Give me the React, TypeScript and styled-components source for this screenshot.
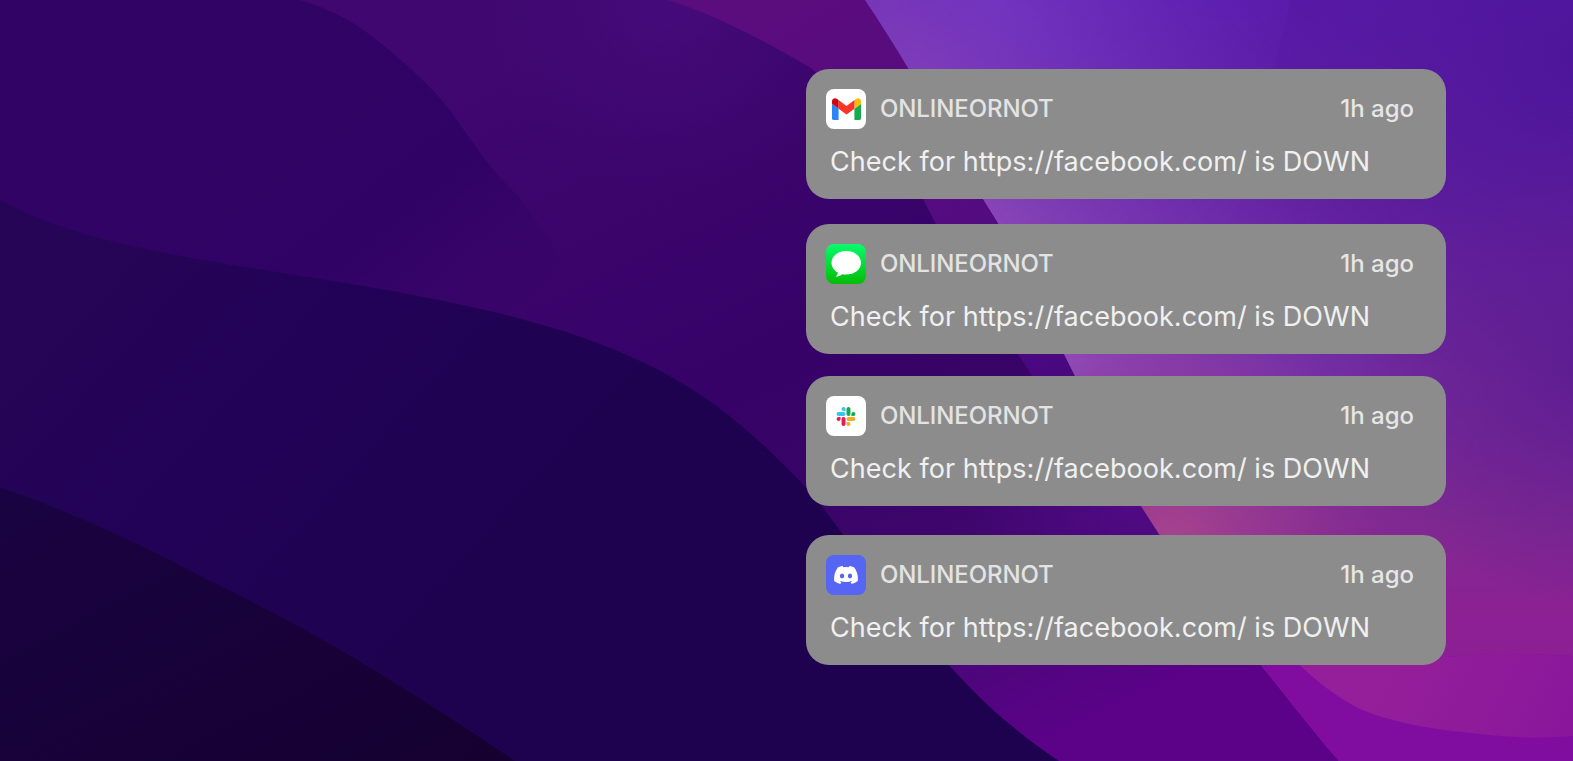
import type { ReactNode } from "react"
import { createGlobalStyle, styled } from "styled-components"
import { FaDiscord } from "react-icons/fa"

const App = () => {
  return (
    <>
      <GlobalStyle />
      <Screen>
        <Wallpaper />
        <NotificationList>
          <Notification icon={<GmailIcon />} iconColor="#fff" />
          <Notification icon={<MessagesIcon />} iconColor="linear-gradient(#07fb6c, #04bd06)" gap={25} />
          <Notification icon={<SlackIcon />} iconColor="#fff" gap={22} />
          <Notification icon={<FaDiscord size={26} />} iconColor="#5765f5" gap={29} />
        </NotificationList>
      </Screen>
    </>
  )
}

export default App

type NotificationProps = {
  icon: ReactNode
  iconColor: string
  gap?: number
}

const Notification = ({ icon, iconColor, gap = 0 }: NotificationProps) => {
  return (
    <Card $gap={gap}>
      <CardHeader>
        <AppIcon $color={iconColor}>{icon}</AppIcon>
        <AppName>ONLINEORNOT</AppName>
        <Time>1h ago</Time>
      </CardHeader>
      <Message>Check for https://facebook.com/ is DOWN</Message>
    </Card>
  )
}

const GmailIcon = () => (
  <svg width="29" height="22" viewBox="52 42 88 66">
    <path fill="#2a85f5" d="M58 108h14V74L52 59v43c0 3.3 0 6 6 6" />
    <path fill="#16ac4c" d="M120 108h14c6 0 6-2.7 6-6V59l-20 15" />
    <path fill="#fbbc04" d="M120 48v26l20-15v-8c0-7.4-8.5-11.6-14.4-7.2" />
    <path fill="#fa3426" d="M72 74V48l24 18 24-18v26L96 92" />
    <path fill="#c90a12" d="M52 51v8l20 15V48l-5.6-4.2c-6-4.4-14.4-.2-14.4 7.2" />
  </svg>
)

const MessagesIcon = () => (
  <svg width="40" height="40" viewBox="0 0 40 40">
    <path
      fill="#fff"
      d="M20.3 7C12 7 5.5 12.1 5.5 18.8c0 4.2 2.5 7.6 6.3 9.8-.1 1.6-.9 2.9-2.2 4 2.6-.1 4.9-1 6.7-2.4 1.300.3 2.600.4 4 .4 8.200 0 14.700-5.100 14.700-11.800S28.500 7 20.300 7z"
    />
  </svg>
)

const SlackIcon = () => (
  <svg width="20" height="19" viewBox="0 0 127 127">
    <path
      fill="#e01e5a"
      d="M27.2 80c0 7.3-5.9 13.2-13.2 13.2S.8 87.300.8 80s5.900-13.200 13.200-13.200h13.200V80zm6.600 0c0-7.300 5.900-13.200 13.200-13.200s13.200 5.900 13.200 13.200v33c0 7.300-5.900 13.200-13.200 13.200s-13.200-5.900-13.200-13.200V80z"
    />
    <path
      fill="#36c5f0"
      d="M47 27c-7.300 0-13.200-5.900-13.200-13.200S39.700.6 47 .6s13.200 5.900 13.200 13.200V27H47zm0 6.700c7.300 0 13.200 5.900 13.200 13.200S54.300 60.100 47 60.100H13.900C6.600 60.100.7 54.200.7 46.900s5.900-13.200 13.200-13.200H47z"
    />
    <path
      fill="#10ad50"
      d="M99.900 46.900c0-7.300 5.900-13.200 13.200-13.200s13.200 5.900 13.200 13.200-5.900 13.200-13.200 13.200H99.900V46.900zm-6.600 0c0 7.300-5.900 13.200-13.200 13.200s-13.200-5.900-13.200-13.200V13.800C66.900 6.500 72.800.6 80.100.6s13.200 5.900 13.200 13.200v33.100z"
    />
    <path
      fill="#ecb022"
      d="M80.100 99.800c7.300 0 13.200 5.900 13.200 13.200s-5.900 13.200-13.200 13.200-13.200-5.900-13.200-13.200V99.800h13.200zm0-6.600c-7.300 0-13.200-5.900-13.200-13.200s5.900-13.200 13.200-13.200h33.100c7.300 0 13.200 5.900 13.200 13.200s-5.900 13.200-13.200 13.200H80.100z"
    />
  </svg>
)

const Wallpaper = () => (
  <Background viewBox="0 0 1573 761" preserveAspectRatio="none">
    <defs>
      <linearGradient id="plum" gradientUnits="userSpaceOnUse" x1="640" y1="0" x2="1000" y2="761">
        <stop offset="0" stopColor="#3f076f" />
        <stop offset="0.45" stopColor="#360268" />
        <stop offset="0.62" stopColor="#380466" />
        <stop offset="0.82" stopColor="#450874" />
        <stop offset="1" stopColor="#5b0288" />
      </linearGradient>
      <radialGradient id="glow" gradientUnits="userSpaceOnUse" cx="670" cy="0" r="190">
        <stop offset="0" stopColor="#480c7e" stopOpacity="0.8" />
        <stop offset="1" stopColor="#420a78" stopOpacity="0" />
      </radialGradient>
      <linearGradient id="violet" gradientUnits="userSpaceOnUse" x1="300" y1="0" x2="540" y2="300">
        <stop offset="0" stopColor="#310365" />
        <stop offset="0.6" stopColor="#300265" />
        <stop offset="1" stopColor="#340466" stopOpacity="0" />
      </linearGradient>
      <linearGradient id="magenta" gradientUnits="userSpaceOnUse" x1="760" y1="0" x2="1090" y2="560">
        <stop offset="0" stopColor="#5b0c7d" />
        <stop offset="0.4" stopColor="#560c80" />
        <stop offset="0.7" stopColor="#4a0880" />
        <stop offset="1" stopColor="#500983" stopOpacity="0" />
      </linearGradient>
      <radialGradient id="ridge" gradientUnits="userSpaceOnUse" cx="1130" cy="480" r="170">
        <stop offset="0" stopColor="#560c8c" stopOpacity="0.85" />
        <stop offset="1" stopColor="#4d0880" stopOpacity="0" />
      </radialGradient>
      <linearGradient id="indigo" gradientUnits="userSpaceOnUse" x1="100" y1="240" x2="500" y2="600">
        <stop offset="0" stopColor="#260556" />
        <stop offset="0.4" stopColor="#220257" />
        <stop offset="1" stopColor="#1e024f" />
      </linearGradient>
      <linearGradient id="night" x1="0" y1="0" x2="1" y2="1">
        <stop offset="0" stopColor="#1a0342" />
        <stop offset="1" stopColor="#150030" />
      </linearGradient>
      <linearGradient id="bright" gradientUnits="userSpaceOnUse" x1="1250" y1="0" x2="1250" y2="761">
        <stop offset="0" stopColor="#5a1cac" />
        <stop offset="0.25" stopColor="#6120a0" />
        <stop offset="0.48" stopColor="#6f2897" />
        <stop offset="0.68" stopColor="#7f2991" />
        <stop offset="0.82" stopColor="#8d2094" />
        <stop offset="1" stopColor="#8b1b98" />
      </linearGradient>
      <linearGradient id="edge" gradientUnits="userSpaceOnUse" x1="975" y1="180" x2="1320" y2="20">
        <stop offset="0" stopColor="#9652bd" stopOpacity="0.9" />
        <stop offset="0.5" stopColor="#7f40bb" stopOpacity="0.5" />
        <stop offset="1" stopColor="#6928b2" stopOpacity="0" />
      </linearGradient>
      <linearGradient id="edgeFade" gradientUnits="userSpaceOnUse" x1="0" y1="0" x2="0" y2="520">
        <stop offset="0" stopColor="#777" />
        <stop offset="0.4" stopColor="#ccc" />
        <stop offset="0.7" stopColor="#fff" />
        <stop offset="1" stopColor="#000" />
      </linearGradient>
      <mask id="edgeMask">
        <rect width="1573" height="761" fill="url(#edgeFade)" />
      </mask>
      <radialGradient id="blue" gradientUnits="userSpaceOnUse" cx="1000" cy="0" r="300">
        <stop offset="0" stopColor="#6a2cc2" stopOpacity="0.9" />
        <stop offset="1" stopColor="#6023b8" stopOpacity="0" />
      </radialGradient>
      <radialGradient id="rose" gradientUnits="userSpaceOnUse" cx="1175" cy="540" r="230">
        <stop offset="0" stopColor="#a7438d" />
        <stop offset="0.5" stopColor="#983a94" stopOpacity="0.65" />
        <stop offset="1" stopColor="#8a3292" stopOpacity="0" />
      </radialGradient>
      <radialGradient id="corner" gradientUnits="userSpaceOnUse" cx="1573" cy="60" r="340">
        <stop offset="0" stopColor="#4a1498" stopOpacity="0.85" />
        <stop offset="1" stopColor="#541897" stopOpacity="0" />
      </radialGradient>
      <radialGradient id="rightShade" gradientUnits="userSpaceOnUse" cx="1600" cy="370" r="240">
        <stop offset="0" stopColor="#5a1a92" stopOpacity="0.85" />
        <stop offset="1" stopColor="#601c90" stopOpacity="0" />
      </radialGradient>
      <linearGradient id="fold" gradientUnits="userSpaceOnUse" x1="0" y1="0" x2="0" y2="240">
        <stop offset="0" stopColor="#50149a" stopOpacity="0.25" />
        <stop offset="1" stopColor="#50149a" stopOpacity="0" />
      </linearGradient>
      <linearGradient id="pink" gradientUnits="userSpaceOnUse" x1="1400" y1="650" x2="1573" y2="735">
        <stop offset="0" stopColor="#951f9a" />
        <stop offset="1" stopColor="#89169b" />
      </linearGradient>
    </defs>
    <rect width="1573" height="761" fill="url(#plum)" />
    <rect width="1573" height="761" fill="url(#glow)" />
    <path
      fill="url(#violet)"
      d="M0 0H300C335 10 360 26 378 41C405 63 430 85 449 109C475 145 487 165 510 187C535 216 550 235 600 330V420H0Z"
    />
    <path
      fill="url(#magenta)"
      d="M668 0C715 15 760 38 811 68C855 105 890 145 923 199L936 224C965 270 987 305 1018 354C1050 402 1080 450 1160 560H1200L900 0Z"
    />
    <rect width="1573" height="761" fill="url(#ridge)" />
    <path
      fill="url(#indigo)"
      d="M0 199C35 220 80 234 128 245C230 268 330 278 434 299C520 316 590 336 653 367C713 398 750 430 800 481C824 506 840 532 865 563C893 602 918 632 949 665C981 701 1014 731 1059 761H0Z"
    />
    <path fill="url(#night)" d="M0 487C60 508 130 538 204 578C318 632 410 690 515 761H0Z" />
    <path fill="url(#bright)" d={brightShape} />
    <path fill="url(#blue)" d={brightShape} />
    <path fill="url(#edge)" d={brightShape} mask="url(#edgeMask)" />
    <path fill="url(#rose)" d={brightShape} />
    <path fill="url(#corner)" d={brightShape} />
    <path fill="url(#rightShade)" d={brightShape} />
    <path fill="url(#fold)" d="M1291 0C1284 30 1278 50 1273 69L1230 240H1573V0Z" />
    {/* bottom band in front of the pink hill */}
    <path
      fill="#810da0"
      d="M1257 661L1261 665C1290 701 1316 735 1339 761H1573V656C1530 653 1490 653 1446 657L1400 640H1260Z"
    />
    <path
      fill="url(#pink)"
      d="M1290 655C1315 681 1334 695 1360 709C1398 725 1440 730 1490 735C1520 738 1550 738 1573 736V656C1530 653 1490 653 1446 657L1430 640Z"
    />
  </Background>
)

const brightShape =
  "M865 0C879 21 894 44 908 68C933 111 956 158 983 199L998 223C1020 266 1040 311 1064 354L1075 376C1098 420 1117 467 1141 506L1159 534C1188 579 1222 625 1261 665C1290 701 1316 735 1339 761H1573V0Z"

const GlobalStyle = createGlobalStyle`
  * {
    box-sizing: border-box;
  }

  body {
    margin: 0;
    overflow: hidden;
    font-family: Inter, "Liberation Sans", sans-serif;
  }
`

const Screen = styled.main`
  position: relative;
  width: 1573px;
  height: 761px;
  overflow: hidden;
`

const Background = styled.svg`
  position: absolute;
  inset: 0;
  width: 100%;
  height: 100%;
`

const NotificationList = styled.div`
  position: relative;
  width: 640px;
  margin-left: 806px;
  padding-top: 69px;
`

const Card = styled.article<{ $gap: number }>`
  height: 130px;
  margin-top: ${({ $gap }) => $gap}px;
  padding: 20px 32px 0 20px;
  border-radius: 23px;
  background: #8c8c8c;
`

const CardHeader = styled.header`
  display: flex;
  align-items: center;
  height: 40px;
`

const AppIcon = styled.div<{ $color: string }>`
  display: flex;
  align-items: center;
  justify-content: center;
  width: 40px;
  height: 40px;
  border-radius: 8px;
  background: ${({ $color }) => $color};
  color: #fff;
`

const AppName = styled.span`
  margin-left: 14px;
  color: #e3e3e3;
  font-size: 24px;
  font-weight: 500;
  letter-spacing: -0.1px;
  line-height: 40px;
`

const Time = styled.time`
  margin-left: auto;
  color: #e6e6e6;
  font-size: 24px;
  font-weight: 500;
  line-height: 40px;
`

const Message = styled.p`
  margin: 15px 0 0 4px;
  color: #f0f0f0;
  font-size: 27px;
  letter-spacing: 0.03px;
  line-height: 36px;
  white-space: nowrap;
`
